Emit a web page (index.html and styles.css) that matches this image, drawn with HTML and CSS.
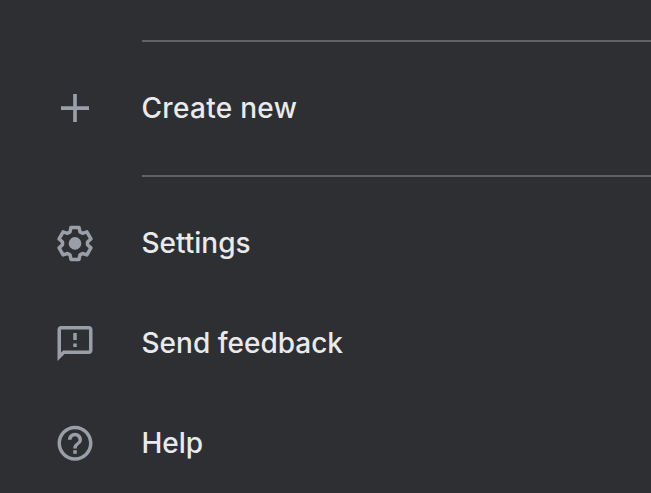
FILE: index.html
```html
<!DOCTYPE html>
<html lang="en">
<head>
  <meta charset="UTF-8"/>
  <meta name="viewport" content="width=device-width, initial-scale=1.0"/>
  <title>Menu</title>
  <link rel="stylesheet" href="styles.css">
</head>
<body>
  <nav class="menu">
    <div class="group create">
      <a class="item">
        <svg class="icon" viewBox="0 0 24 24"><path d="M10.95 4h2.1v7H20v2.1h-6.95V20h-2.1v-6.9H4V11h6.95z"/></svg>
        <span class="label create-label">Create new</span>
      </a>
    </div>
    <div class="group">
      <a class="item">
        <svg class="icon" viewBox="-21 -21.4 42 42">
          <path class="gear" d="M-4-16H4L5-11.5L7.5-10.1L11.9-11.5L15.9-4.5L12.5-1.4V1.4L15.9 4.5L11.9 11.5L7.5 10.1L5 11.5L4 16H-4L-5 11.5L-7.5 10.1L-11.9 11.5L-15.9 4.5L-12.5 1.4V-1.4L-15.9-4.5L-11.9-11.5L-7.5-10.1L-5-11.5Z"/>
          <circle r="6.3"/>
        </svg>
        <span class="label">Settings</span>
      </a>
      <a class="item">
        <svg class="icon" viewBox="0 -.25 24 24"><path d="M20 2H4c-1.1 0-2 .9-2 2v18l4-4h14c1.1 0 2-.9 2-2V4c0-1.1-.9-2-2-2zm0 14H5.17L4 17.17V4h16v12zM11 12h2v2h-2zM11 6h2v4h-2z"/></svg>
        <span class="label">Send feedback</span>
      </a>
      <a class="item">
        <svg class="icon" viewBox="0 -.15 24 24"><path d="M11 18h2v-2h-2v2zm1-16C6.48 2 2 6.48 2 12s4.48 10 10 10 10-4.48 10-10S17.52 2 12 2zm0 18c-4.41 0-8-3.59-8-8s3.59-8 8-8 8 3.59 8 8-3.59 8-8 8zm0-14c-2.21 0-4 1.79-4 4h2c0-1.1.9-2 2-2s2 .9 2 2c0 2-3 1.75-3 5h2c0-2.25 3-2.5 3-5 0-2.21-1.79-4-4-4z"/></svg>
        <span class="label">Help</span>
      </a>
    </div>
  </nav>
</body>
</html>
```
FILE: styles.css
```css
:root {
  --bg-color: #2e2f33;
  --text-color: #e8eaed;
  --icon-color: #9a9fa7;
  --line-color: #606266;
}

*, *::before, *::after { box-sizing: border-box; }

body {
  margin: 0;
  height: 100vh;
  overflow: hidden;
  background: var(--bg-color);
  color: var(--text-color);
  font-family: Inter, Roboto, sans-serif;
}

.menu {
  padding-top: 40px;
}

.group {
  padding: 16px 0;
}

.group::before {
  content: '';
  display: block;
  height: 2px;
  margin: -16px 0 16px 142px;
  background: var(--line-color);
}

.item {
  display: flex;
  align-items: center;
  gap: 45.5px;
  height: 100px;
  padding-left: 54px;
}

.create { padding-bottom: 17px; }

.icon {
  flex: none;
  width: 42px;
  height: 42px;
  fill: var(--icon-color);
}

.gear {
  fill: none;
  stroke: var(--icon-color);
  stroke-width: 3.5;
  stroke-linejoin: round;
}

.label {
  font-size: 28px;
  font-weight: 500;
  line-height: 40px;
  white-space: nowrap;
}

.create-label { letter-spacing: 0.3px; }
```
